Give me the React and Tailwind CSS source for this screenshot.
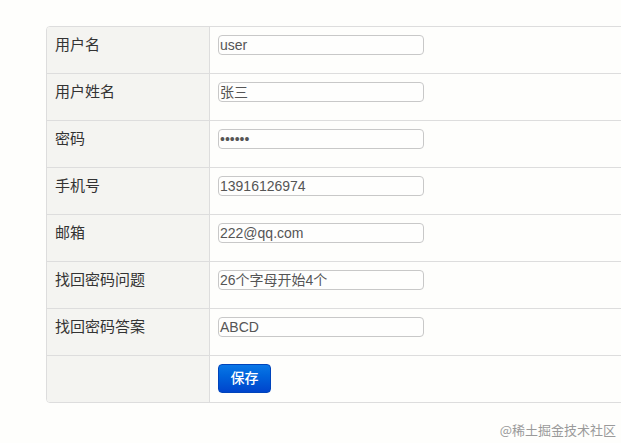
import React from "react";

const rows = [
  ["用户名", "user"],
  ["用户姓名", "张三"],
  ["密码", "••••••"],
  ["手机号", "13916126974"],
  ["邮箱", "222@qq.com"],
  ["找回密码问题", "26个字母开始4个"],
  ["找回密码答案", "ABCD"],
];

const font = { fontFamily: '"Liberation Sans", Arial, "Noto Sans CJK SC", sans-serif' };

export default function App() {
  return (
    <div className="w-[621px] h-[443px] overflow-hidden bg-[#fefefc] relative" style={font}>
      <div className="pt-[26px] pl-[46px]">
        <div className="w-[620px] border border-[#dddddd] rounded-[4px] overflow-hidden">
          {rows.map(([label, value], i) => (
            <div key={i} className={`flex ${i > 0 ? "h-[47px] border-t border-[#dddddd]" : "h-[46px]"}`}>
              <div className="w-[163px] shrink-0 bg-[#f4f4f1] border-r border-[#dddddd] pl-[8px] pt-[8px] text-[15px] leading-[20px] text-[#333333]">
                {label}
              </div>
              <div className="flex-1 pl-[8px] pt-[8px]">
                <div className="w-[206px] h-[20px] border border-[#c8c8c8] rounded-[4px] bg-[#fefefd] text-[14px] leading-[18px] text-[#555555] pl-[1px] overflow-hidden whitespace-nowrap">
                  {value}
                </div>
              </div>
            </div>
          ))}
          <div className="flex h-[47px] border-t border-[#dddddd]">
            <div className="w-[163px] shrink-0 bg-[#f4f4f1] border-r border-[#dddddd]" />
            <div className="flex-1 pl-[8px] pt-[8px]">
              <button className="w-[53px] h-[29px] rounded-[4px] bg-gradient-to-b from-[#0b77e6] to-[#0044cc] border border-[#0044bb] text-white text-[14px] font-medium">
                保存
              </button>
            </div>
          </div>
        </div>
      </div>
      <div className="absolute right-[5px] bottom-[4px] text-[13px] text-[#9a9a9a]" style={{ fontFamily: '"Noto Sans CJK SC", sans-serif' }}>
        @稀土掘金技术社区
      </div>
    </div>
  );
}
